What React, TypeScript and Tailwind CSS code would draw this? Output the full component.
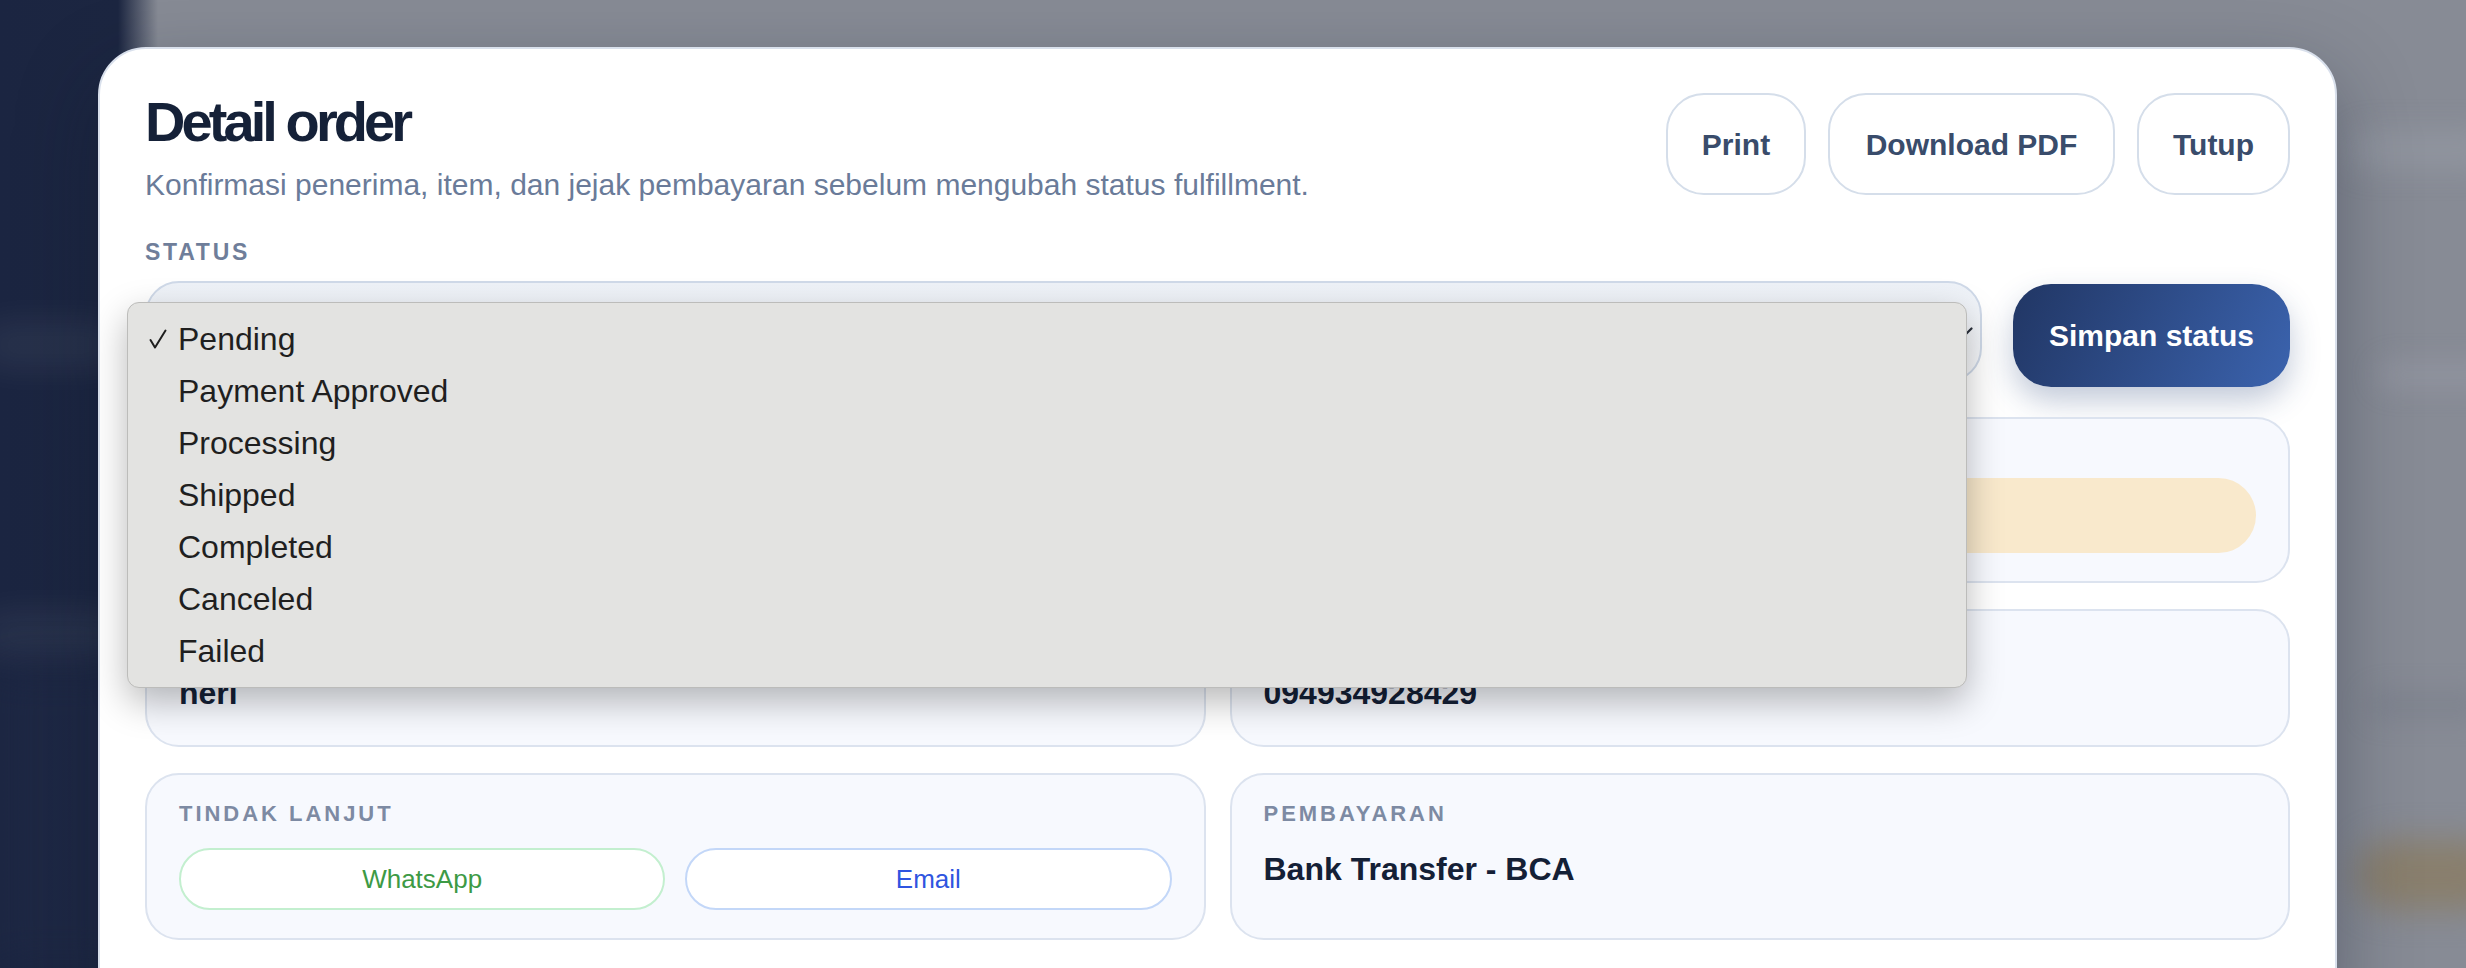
import React from "react";

const statuses = ["Pending", "Payment Approved", "Processing", "Shipped", "Completed", "Canceled", "Failed"];

function CardLabel({ children }: { children: React.ReactNode }) {
    return (
        <div className="text-[22px] leading-[33px] font-bold uppercase tracking-[0.135em] text-[#7d8aa3]">
            {children}
        </div>
    );
}

function Card({ children }: { children: React.ReactNode }) {
    return (
        <div className="rounded-[34px] border-2 border-[#dce3ef] bg-[#f7f9fe] px-[32px] pt-[22px] pb-[28px]">
            {children}
        </div>
    );
}

export default function App() {
    return (
        <div className="relative h-[968px] w-[2466px] overflow-hidden bg-[linear-gradient(90deg,#1b2541_0px,#1c2641_118px,#878b95_158px,#878b95_100%)] font-['Liberation_Sans',Arial,sans-serif]">
            {/* Blurred page behind the overlay */}
            <div className="pointer-events-none absolute inset-0">
                <div className="absolute left-[-20px] top-[320px] h-[50px] w-[140px] rounded-full bg-white/[0.06] blur-[16px]" />
                <div className="absolute left-[-20px] top-[610px] h-[50px] w-[140px] rounded-full bg-white/[0.06] blur-[16px]" />
                <div className="absolute left-0 bottom-0 h-[300px] w-[120px] bg-[#1f2a46]/60 blur-[20px]" />
                <div className="absolute right-[-30px] top-[130px] h-[40px] w-[150px] rounded-full bg-[#9ea2ad]/40 blur-[14px]" />
                <div className="absolute right-[-30px] top-[360px] h-[30px] w-[120px] rounded-full bg-[#9a9eaa]/40 blur-[12px]" />
                <div className="absolute right-[-20px] top-[690px] h-[30px] w-[120px] rounded-full bg-[#767b88]/40 blur-[12px]" />
                <div className="absolute right-[-40px] top-[840px] h-[70px] w-[150px] rounded-full bg-[#8a7c63]/80 blur-[16px]" />
            </div>

            {/* Modal */}
            <div className="relative ml-[98px] mt-[47px] h-[960px] w-[2239px] rounded-t-[48px] border-2 border-[#d9e0ec] bg-white px-[45px] pt-[42px] shadow-[0_30px_80px_rgba(15,23,42,0.35)]">
                <div className="flex items-start justify-between">
                    <div>
                        <h1 className="mt-[3px] text-[56px] leading-[56px] font-bold tracking-[-0.07em] text-[#152138]">Detail order</h1>
                        <p className="mt-[12px] text-[30px] leading-[45px] text-[#6a7b99]">
                            Konfirmasi penerima, item, dan jejak pembayaran sebelum mengubah status fulfillment.
                        </p>
                    </div>
                    <div className="mt-[2px] flex gap-[22px]">
                        {[
                            { label: "Print", w: "w-[140px]" },
                            { label: "Download PDF", w: "w-[287px]" },
                            { label: "Tutup", w: "w-[153px]" },
                        ].map((b) => (
                            <button
                                key={b.label}
                                className={`${b.w} flex h-[102px] items-center justify-center rounded-[38px] border-2 border-[#d5deea] bg-white text-[30px] font-bold text-[#394c6b]`}
                            >
                                {b.label}
                            </button>
                        ))}
                    </div>
                </div>

                <div className="mt-[28px] text-[23px] leading-[34px] font-bold tracking-[0.12em] text-[#6f7e9a]">STATUS</div>

                <div className="mt-[12px] flex items-start gap-[31px]">
                    <div className="flex h-[101px] flex-1 items-center justify-between rounded-[34px] border-2 border-[#cfd9e8] bg-[linear-gradient(180deg,#eef2f8,#f8f9fb)] pl-[32px] pr-[7px]">
                        <span className="text-[30px] text-[#152138]">Pending</span>
                        <svg width="16" height="10" viewBox="0 0 16 10" fill="none">
                            <path d="M1.5 1.5 L8 8 L14.5 1.5" stroke="#2a2f3a" strokeWidth="2.2" strokeLinecap="round" strokeLinejoin="round" />
                        </svg>
                    </div>
                    <button className="mt-[3px] flex h-[103px] w-[277px] items-center justify-center rounded-[38px] bg-[linear-gradient(115deg,#213664,#3b63ae)] text-[30px] font-bold text-white shadow-[0_14px_30px_rgba(37,64,120,0.28)]">
                        Simpan status
                    </button>
                </div>

                <div className="mt-[30px] grid grid-cols-2 gap-x-[24px] gap-y-[26px]">
                    <Card>
                        <CardLabel>Nomor order</CardLabel>
                        <div className="mt-[4px] flex h-[75px] items-center text-[32px] font-bold text-[#142036]">#ORD-20240915-0012</div>
                    </Card>
                    <Card>
                        <CardLabel>Status saat ini</CardLabel>
                        <div className="mt-[4px] flex h-[75px] items-center rounded-full bg-[#f9e9cc] px-[28px] text-[28px] font-bold text-[#b7791f]">
                            Pending
                        </div>
                    </Card>
                    <Card>
                        <CardLabel>Penerima</CardLabel>
                        <div className="mt-[3px] text-[32px] leading-[48px] font-bold text-[#142036]">heri</div>
                    </Card>
                    <Card>
                        <CardLabel>Telepon</CardLabel>
                        <div className="mt-[3px] text-[32px] leading-[48px] font-bold text-[#142036]">094934928429</div>
                    </Card>
                    <Card>
                        <CardLabel>Tindak lanjut</CardLabel>
                        <div className="mt-[18px] grid grid-cols-2 gap-[20px]">
                            <button className="flex h-[62px] items-center justify-center rounded-full border-2 border-[#c3efcf] bg-white text-[26px] text-[#3d9a45]">
                                WhatsApp
                            </button>
                            <button className="flex h-[62px] items-center justify-center rounded-full border-2 border-[#c3d7f8] bg-white text-[26px] text-[#2f55e0]">
                                Email
                            </button>
                        </div>
                    </Card>
                    <Card>
                        <CardLabel>Pembayaran</CardLabel>
                        <div className="mt-[15px] text-[32px] leading-[48px] font-bold text-[#142036]">Bank Transfer - BCA</div>
                    </Card>
                </div>
            </div>

            {/* Native select popup */}
            <div className="absolute left-[127px] top-[302px] w-[1840px] rounded-[12px] border border-[#bcbcba] bg-[#e3e3e1] pt-[10px] pb-[10px] shadow-[0_14px_36px_rgba(0,0,0,0.28)]">
                {statuses.map((s, i) => (
                    <div key={s} className="flex h-[52px] items-center pl-[21px] text-[32px] text-[#1f1f1f]">
                        <span className="flex w-[29px] items-center">
                            {i === 0 && (
                                <svg width="18" height="20" viewBox="0 0 18 20" fill="none">
                                    <path d="M1.5 11 L6 18.5 L16.5 1.5" stroke="#1f1f1f" strokeWidth="2" strokeLinecap="round" strokeLinejoin="round" />
                                </svg>
                            )}
                        </span>
                        {s}
                    </div>
                ))}
            </div>
        </div>
    );
}
